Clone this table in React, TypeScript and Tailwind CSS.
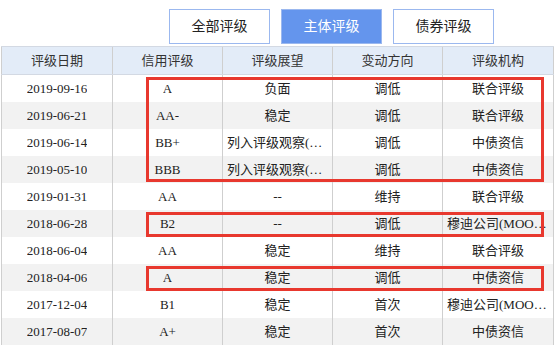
import { useState } from "react";

type Row = {
	date: string;
	rating: string;
	outlook: string;
	change: string;
	agency: string;
};

const rows: Row[] = [
	{ date: "2019-09-16", rating: "A", outlook: "负面", change: "调低", agency: "联合评级" },
	{ date: "2019-06-21", rating: "AA-", outlook: "稳定", change: "调低", agency: "联合评级" },
	{ date: "2019-06-14", rating: "BB+", outlook: "列入评级观察(可能调低)", change: "调低", agency: "中债资信" },
	{ date: "2019-05-10", rating: "BBB", outlook: "列入评级观察(可能调低)", change: "调低", agency: "中债资信" },
	{ date: "2019-01-31", rating: "AA", outlook: "--", change: "维持", agency: "联合评级" },
	{ date: "2018-06-28", rating: "B2", outlook: "--", change: "调低", agency: "穆迪公司(MOODY'S)" },
	{ date: "2018-06-04", rating: "AA", outlook: "稳定", change: "维持", agency: "联合评级" },
	{ date: "2018-04-06", rating: "A", outlook: "稳定", change: "调低", agency: "中债资信" },
	{ date: "2017-12-04", rating: "B1", outlook: "稳定", change: "首次", agency: "穆迪公司(MOODY'S)" },
	{ date: "2017-08-07", rating: "A+", outlook: "稳定", change: "首次", agency: "中债资信" },
];

const tabs = ["全部评级", "主体评级", "债券评级"];
const headers = ["评级日期", "信用评级", "评级展望", "变动方向", "评级机构"];
const widths = ["w-[111px]", "w-[110px]", "w-[110px]", "w-[110px]", "w-[112px] border-r"];

function Cell({ text, i }: { text: string; i: number }) {
	return (
		<div
			className={`${widths[i]} shrink-0 border-l border-[#cfcfcf] px-[4px] flex items-center justify-center overflow-hidden`}
		>
			<span className="truncate">{text}</span>
		</div>
	);
}

export default function App() {
	const [active, setActive] = useState(1);

	return (
		<div
			className="w-[554px] h-[345px] overflow-hidden bg-white text-[13px] text-[#222]"
			style={{ fontFamily: '"Liberation Serif", "Noto Sans CJK SC", serif' }}
		>
			<div className="flex gap-[11px] pl-[169px] pt-[9px] h-[46px]">
				{tabs.map((t, i) => (
					<button
						key={t}
						onClick={() => setActive(i)}
						className={`w-[101px] h-[35px] border border-[#9bb8ef] text-[14px] ${
							active === i ? "bg-[#6495ed] text-white" : "bg-white text-[#222]"
						}`}
					>
						{t}
					</button>
				))}
			</div>

			<div className="ml-px w-[553px]">
				<div className="flex h-[29px] bg-[#e3ecf8] border-t border-b border-[#d3d9e3] text-[#333]">
					{headers.map((h, i) => (
						<Cell key={h} text={h} i={i} />
					))}
				</div>

				<div className="relative">
					{rows.map((r, idx) => (
						<div
							key={r.date}
							className={`flex h-[27px] ${idx % 2 === 1 ? "bg-[#f2f2f2]" : "bg-white"}`}
						>
							{[r.date, r.rating, r.outlook, r.change, r.agency].map((v, i) => (
								<Cell key={i} text={v} i={i} />
							))}
						</div>
					))}

					{/* annotation boxes */}
					<div className="absolute left-[145px] top-[2px] w-[398px] h-[105px] border-[3px] border-[#e8382e]" />
					<div className="absolute left-[145px] top-[137px] w-[398px] h-[25px] border-[3px] border-[#e8382e]" />
					<div className="absolute left-[145px] top-[191px] w-[398px] h-[25px] border-[3px] border-[#e8382e]" />
				</div>
			</div>
		</div>
	);
}
